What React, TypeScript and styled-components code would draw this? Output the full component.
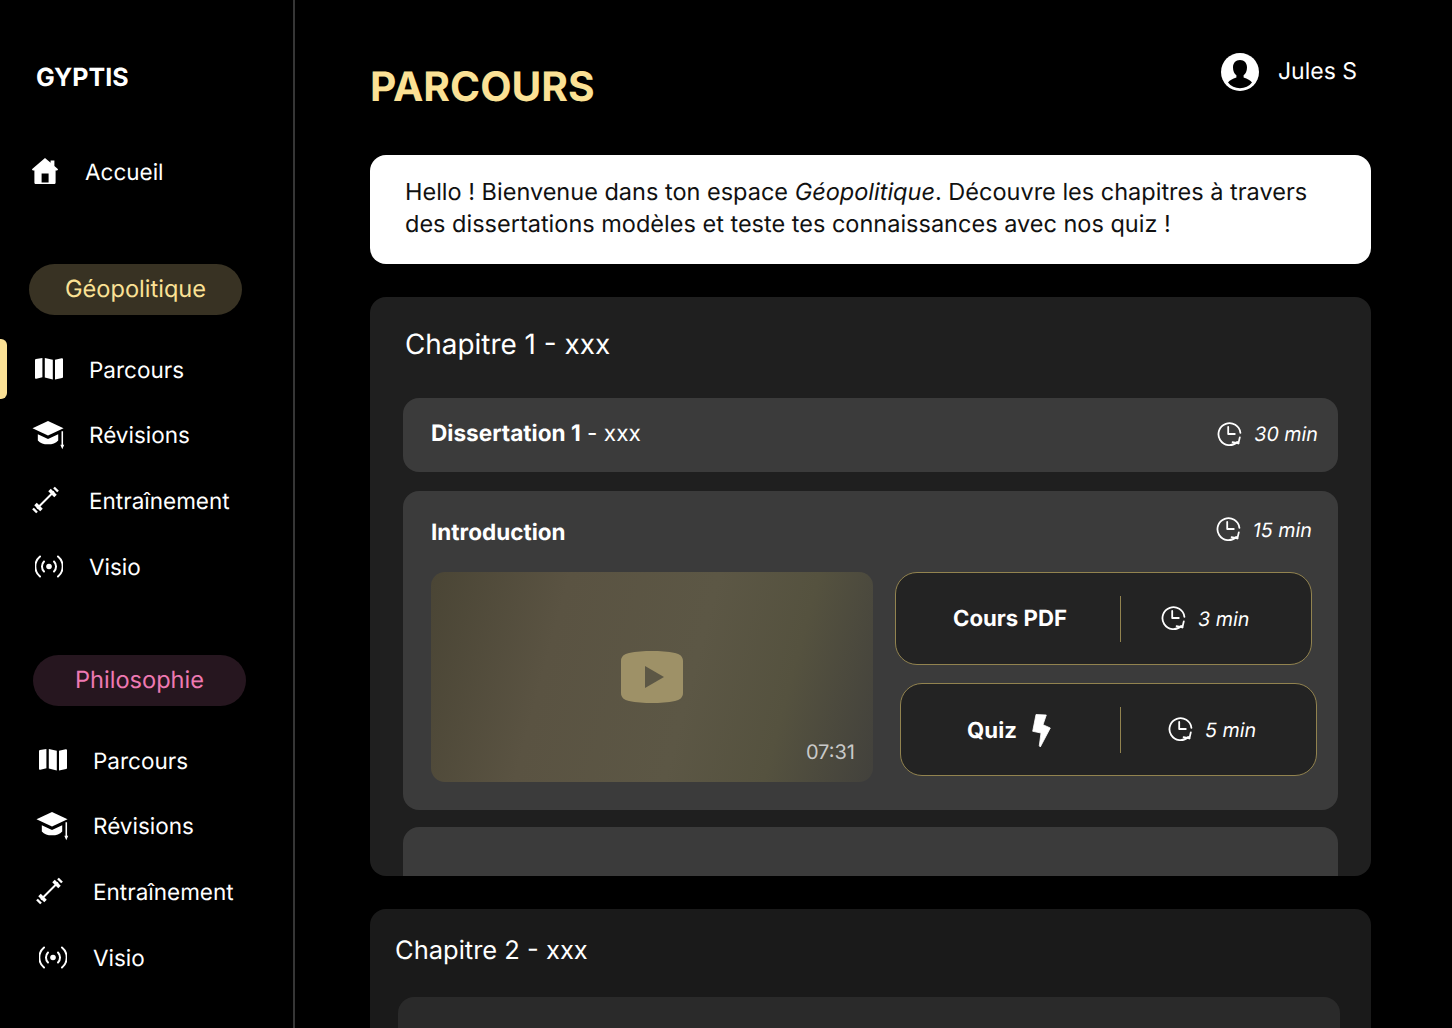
import React from "react";
import styled, { createGlobalStyle } from "styled-components";

const GlobalStyle = createGlobalStyle`
  html, body {
    margin: 0;
    height: 100%;
    background: #000;
    overflow: hidden;
  }
  body {
    font-family: "Inter", "Liberation Sans", sans-serif;
    color: #fff;
    text-rendering: geometricPrecision;
  }
`;

const Page = styled.div`
  display: flex;
  width: 1452px;
  height: 1028px;
  overflow: hidden;
  background: #000;
`;

const Sidebar = styled.aside`
  position: relative;
  flex: none;
  box-sizing: border-box;
  width: 295px;
  height: 100%;
  border-right: 2px solid #363636;
  display: flex;
  flex-direction: column;
`;

const Logo = styled.div`
  margin: 64px 0 0 36px;
  font-size: 25px;
  line-height: 29px;
  font-weight: 700;
`;

const HomeLink = styled.div`
  display: flex;
  align-items: center;
  gap: 27px;
  margin: 64px 0 0 32px;
  height: 30px;
  font-size: 22.5px;
  font-weight: 400;
`;

const HomeSvg = styled.svg`
  margin-bottom: 3px;
`;

const Section = styled.section<{ $shift: number; $top: number }>`
  display: flex;
  flex-direction: column;
  margin: ${(p) => p.$top}px 0 0 ${(p) => p.$shift}px;
`;

const SectionPill = styled.div<{ $bg: string; $fg: string }>`
  box-sizing: border-box;
  width: 213px;
  height: 51px;
  padding-bottom: 2px;
  border-radius: 26px;
  display: flex;
  align-items: center;
  justify-content: center;
  background: ${(p) => p.$bg};
  color: ${(p) => p.$fg};
  font-size: 23.6px;
`;

const NavList = styled.ul`
  list-style: none;
  margin: 36px 0 0;
  padding: 0;
  display: flex;
  flex-direction: column;
  gap: 29.7px;
`;

const NavItem = styled.li`
  box-sizing: border-box;
  display: flex;
  align-items: center;
  height: 36px;
  padding: 2px 0 0 3px;
  gap: 24px;
  font-size: 22.5px;
`;

const NavIcon = styled.span`
  width: 33px;
  margin-top: -2px;
  display: flex;
  justify-content: center;
  flex: none;
`;

const ActiveMark = styled.div`
  position: absolute;
  left: 0;
  top: 339px;
  width: 7px;
  height: 60px;
  background: #fbe195;
  border-radius: 0 6px 6px 0;
`;

const Main = styled.main`
  flex: none;
  width: 1001px;
  margin-left: 75px;
  display: flex;
  flex-direction: column;
`;

const Header = styled.header`
  flex: none;
  display: flex;
  justify-content: space-between;
  align-items: flex-start;
  height: 155px;
`;

const Title = styled.h1`
  margin: 63px 0 0;
  font-size: 40.7px;
  line-height: 48px;
  font-weight: 700;
  color: #fbe195;
`;

const UserBox = styled.div`
  display: flex;
  align-items: center;
  gap: 19px;
  margin: 51px 14px 0 0;
  font-size: 23px;
  line-height: 40px;
`;

const UserSvg = styled.svg`
  margin-top: 2px;
`;

const Welcome = styled.p`
  flex: none;
  margin: 0;
  box-sizing: border-box;
  height: 109px;
  padding: 21px 35px 0;
  background: #fff;
  color: #111;
  border-radius: 16px;
  font-size: 23.5px;
  line-height: 32px;
  & em {
    font-style: italic;
  }
`;

const Chapter = styled.section<{ $bg: string; $height: number; $top: number; $pad: number }>`
  box-sizing: border-box;
  flex: none;
  margin-top: ${(p) => p.$top}px;
  height: ${(p) => p.$height}px;
  overflow: hidden;
  background: ${(p) => p.$bg};
  border-radius: 16px;
  padding: 0 ${(p) => p.$pad}px;
`;

const ChapterTitle = styled.h2<{ $pad: number; $top: number; $height: number; $size: number }>`
  margin: 0;
  padding: ${(p) => p.$top}px 0 0 ${(p) => p.$pad}px;
  height: ${(p) => p.$height}px;
  box-sizing: border-box;
  font-size: ${(p) => p.$size}px;
  line-height: 34px;
  font-weight: 400;
  color: #fff;
`;

const LessonRow = styled.div`
  height: 74px;
  box-sizing: border-box;
  padding: 0 20px 2px 28px;
  display: flex;
  align-items: center;
  justify-content: space-between;
  background: #3b3b3b;
  border-radius: 16px;
  font-size: 22.6px;
`;

const LessonName = styled.span`
  padding-bottom: 2px;
  & strong {
    font-weight: 700;
  }
`;

const IntroCard = styled.div`
  margin-top: 19px;
  height: 319px;
  box-sizing: border-box;
  padding: 26px 0 0 28px;
  background: #3b3b3b;
  border-radius: 16px;
`;

const IntroHead = styled.div`
  display: flex;
  justify-content: space-between;
  align-items: flex-start;
  height: 55px;
  padding-right: 26px;
`;

const IntroTitle = styled.h3`
  margin: 0;
  padding-top: 2px;
  font-size: 22.5px;
  line-height: 28px;
  font-weight: 700;
`;

const IntroBody = styled.div`
  display: flex;
  gap: 22px;
`;

const Video = styled.div`
  position: relative;
  flex: none;
  width: 442px;
  height: 210px;
  border-radius: 14px;
  display: flex;
  align-items: center;
  justify-content: center;
  background: linear-gradient(105deg, #4a4535 0%, #5a5342 28%, #5c5745 58%, #55523f 78%, #42413c 100%);
`;

const VideoLength = styled.span`
  position: absolute;
  right: 18px;
  bottom: 18px;
  font-size: 20px;
  line-height: 24px;
  color: #c9c9c9;
`;

const ActivityColumn = styled.div`
  display: flex;
  flex-direction: column;
  gap: 18px;
`;

const ActivityCard = styled.div<{ $shift: number; $split: number }>`
  box-sizing: border-box;
  display: grid;
  grid-template-columns: ${(p) => p.$split}px 1px 1fr;
  align-items: center;
  width: 417px;
  height: 93px;
  margin-left: ${(p) => p.$shift}px;
  background: #232323;
  border: 1px solid #92834f;
  border-radius: 22px;
`;

const ActivityName = styled.div<{ $top: number; $left: number; $right: number }>`
  display: flex;
  align-items: center;
  justify-content: center;
  gap: 15px;
  padding: ${(p) => p.$top}px ${(p) => p.$right}px 0 ${(p) => p.$left}px;
  font-size: 22.2px;
  font-weight: 700;
`;

const Divider = styled.div`
  width: 1px;
  height: 46px;
  background: #92834f;
`;

const Duration = styled.span<{ $pad?: number }>`
  display: flex;
  align-items: center;
  gap: 12px;
  padding-left: ${(p) => p.$pad ?? 0}px;
  font-size: 19.7px;
  line-height: 24px;
  font-style: italic;
  font-weight: 400;
  color: #fff;
`;

const NextCard = styled.div`
  margin-top: 17px;
  height: 80px;
  background: #3b3b3b;
  border-radius: 16px;
`;

const SecondCard = styled.div`
  margin-left: 3px;
  width: 942px;
  height: 80px;
  background: #2a2a2a;
  border-radius: 16px;
`;

const BarbellSvg = styled.svg`
  margin-right: 6px;
`;

const Clock = () => (
  <svg width="25" height="25" viewBox="0 0 25 25" fill="none" stroke="#fff" strokeWidth="1.8" strokeLinecap="round" strokeLinejoin="round">
    <path d="M23.4 10.8A11 11 0 1 0 20.2 20L21.4 21.4" />
    <path d="M11.2 5V12H17.8" />
    <path d="M22.8 15.4L21.4 21.4L15.6 20.2" />
  </svg>
);

const HomeIcon = () => (
  <HomeSvg width="26" height="26" viewBox="0 0 26 26" fill="#fff" fillRule="evenodd">
    <path d="M13 0L18.6 4.8V2.4H22.4V8L25.8 11C26.2 11.6 25.9 12.4 25 12.4H23.6V24.4C23.6 25.4 22.9 26 22 26H4C3.1 26 2.4 25.4 2.4 24.4V12.4H1C0.1 12.4 -0.2 11.6 0.2 11ZM9.6 15.6V24.4H16.6V15.6Z" />
  </HomeSvg>
);

const MapIcon = () => (
  <svg width="30" height="22" viewBox="0 0 30 22" fill="#fff">
    <path d="M1 2.2C1 1.6 1.4 1.2 2 1.1L8.4 0V19.2L2.3 20.8C1.6 21 1 20.5 1 19.8Z" />
    <path d="M10.8 0L18.8 1.8V21.6L10.8 19.4Z" />
    <path d="M21 1.8L27.7 0.2C28.4 0.1 29 0.6 29 1.3V19C29 19.6 28.6 20 28.1 20.1L21 21.6Z" />
  </svg>
);

const CapIcon = () => (
  <svg width="34" height="30" viewBox="0 0 34 30" fill="#fff">
    <path d="M16.5 0.5L32.5 8L16.5 15.6L0.5 8Z" />
    <path d="M6 14.2L16.5 19.2L27 14.2V20.6C24.6 23.2 21 24.6 16.5 24.6C12 24.6 8.4 23.2 6 20.6Z" />
    <path d="M30.4 11.2H32V25H33.2L31.2 29.6L29.2 25H30.4Z" />
  </svg>
);

const BarbellIcon = () => (
  <BarbellSvg width="28" height="28" viewBox="0 0 27 27" fill="none" stroke="#fff">
    <path d="M5 22L22 5" strokeWidth="2" />
    <path d="M17.5 3.5L23.5 9.5" strokeWidth="3.6" />
    <path d="M22 1L26 5" strokeWidth="2.4" />
    <path d="M9.5 23.5L3.5 17.5" strokeWidth="3.6" />
    <path d="M5 26L1 22" strokeWidth="2.4" />
  </BarbellSvg>
);

const SignalIcon = () => (
  <svg width="28" height="23" viewBox="0 0 28 23" fill="none" stroke="#fff" strokeWidth="2" strokeLinecap="round">
    <circle cx="14" cy="11.5" r="2.8" fill="#fff" stroke="none" />
    <path d="M9 6.5A7.2 7.2 0 0 0 9 16.5" />
    <path d="M19 6.5A7.2 7.2 0 0 1 19 16.5" />
    <path d="M5 1.5A13 13 0 0 0 5 21.5" />
    <path d="M23 1.5A13 13 0 0 1 23 21.5" />
  </svg>
);

const UserIcon = () => (
  <UserSvg width="38" height="38" viewBox="0 0 38 38">
    <circle cx="19" cy="19" r="19" fill="#fff" />
    <path
      fill="#000"
      d="M19 7C14.6 7 12 10.2 12 14.4C12 18 13.4 20.6 15.4 22.2V24.4C11.6 25.6 8.4 27.2 7 29.6C9.8 33.2 14.2 35.2 19 35.2C23.8 35.2 28.2 33.2 31 29.6C29.6 27.2 26.4 25.6 22.6 24.4V22.2C24.6 20.6 26 18 26 14.4C26 10.2 23.4 7 19 7Z"
    />
  </UserSvg>
);

const BoltIcon = () => (
  <svg width="19" height="34" viewBox="0 0 19 34" fill="#fff" stroke="#fff" strokeWidth="0.8" strokeLinejoin="round">
    <path d="M4 0.5L14.3 1L11 10.7L18.3 14L8.3 33L7.3 31.7L9 19L0.7 17.3Z" />
  </svg>
);

const PlayIcon = () => (
  <svg width="62" height="52" viewBox="0 0 62 52">
    <path
      fill="#9e9167"
      d="M8 2C15 0.6 23 0 31 0C39 0 47 0.6 54 2C58.6 2.8 62 5.4 62 10V42C62 46.6 58.6 49.2 54 50C47 51.4 39 52 31 52C23 52 15 51.4 8 50C3.4 49.2 0 46.6 0 42V10C0 5.4 3.4 2.8 8 2Z"
    />
    <path fill="#5c5745" d="M24 15L43 26L24 37Z" />
  </svg>
);

const navItems = [
  { label: "Parcours", icon: <MapIcon /> },
  { label: "Révisions", icon: <CapIcon /> },
  { label: "Entraînement", icon: <BarbellIcon /> },
  { label: "Visio", icon: <SignalIcon /> },
];

const NavLinks = () => (
  <NavList>
    {navItems.map((item) => (
      <NavItem key={item.label}>
        <NavIcon>{item.icon}</NavIcon>
        {item.label}
      </NavItem>
    ))}
  </NavList>
);

const App: React.FC = () => {
  return (
    <Page>
      <GlobalStyle />
      <Sidebar>
        <ActiveMark />
        <Logo>GYPTIS</Logo>
        <HomeLink>
          <HomeIcon />
          Accueil
        </HomeLink>
        <Section $shift={29} $top={77}>
          <SectionPill $bg="#383223" $fg="#fbe195">
            Géopolitique
          </SectionPill>
          <NavLinks />
        </Section>
        <Section $shift={33} $top={71}>
          <SectionPill $bg="#26161f" $fg="#ee79b2">
            Philosophie
          </SectionPill>
          <NavLinks />
        </Section>
      </Sidebar>
      <Main>
        <Header>
          <Title>PARCOURS</Title>
          <UserBox>
            <UserIcon />
            Jules S
          </UserBox>
        </Header>
        <Welcome>
          Hello ! Bienvenue dans ton espace <em>Géopolitique</em>. Découvre les chapitres à travers
          <br />
          des dissertations modèles et teste tes connaissances avec nos quiz !
        </Welcome>
        <Chapter $bg="#1f1f1f" $height={579} $top={33} $pad={33}>
          <ChapterTitle $pad={2} $top={30} $height={101} $size={27.9}>
            Chapitre 1 - xxx
          </ChapterTitle>
          <LessonRow>
            <LessonName>
              <strong>Dissertation 1</strong> - xxx
            </LessonName>
            <Duration>
              <Clock />
              30 min
            </Duration>
          </LessonRow>
          <IntroCard>
            <IntroHead>
              <IntroTitle>Introduction</IntroTitle>
              <Duration>
                <Clock />
                15 min
              </Duration>
            </IntroHead>
            <IntroBody>
              <Video>
                <PlayIcon />
                <VideoLength>07:31</VideoLength>
              </Video>
              <ActivityColumn>
                <ActivityCard $shift={0} $split={224}>
                  <ActivityName $top={0} $left={4} $right={0}>
                    Cours PDF
                  </ActivityName>
                  <Divider />
                  <Duration $pad={40}>
                    <Clock />
                    3 min
                  </Duration>
                </ActivityCard>
                <ActivityCard $shift={5} $split={219}>
                  <ActivityName $top={2} $left={0} $right={3}>
                    Quiz
                    <BoltIcon />
                  </ActivityName>
                  <Divider />
                  <Duration $pad={47}>
                    <Clock />
                    5 min
                  </Duration>
                </ActivityCard>
              </ActivityColumn>
            </IntroBody>
          </IntroCard>
          <NextCard />
        </Chapter>
        <Chapter $bg="#1a1a1a" $height={200} $top={33} $pad={25}>
          <ChapterTitle $pad={0} $top={25} $height={88} $size={25.5}>
            Chapitre 2 - xxx
          </ChapterTitle>
          <SecondCard />
        </Chapter>
      </Main>
    </Page>
  );
};

export default App;
